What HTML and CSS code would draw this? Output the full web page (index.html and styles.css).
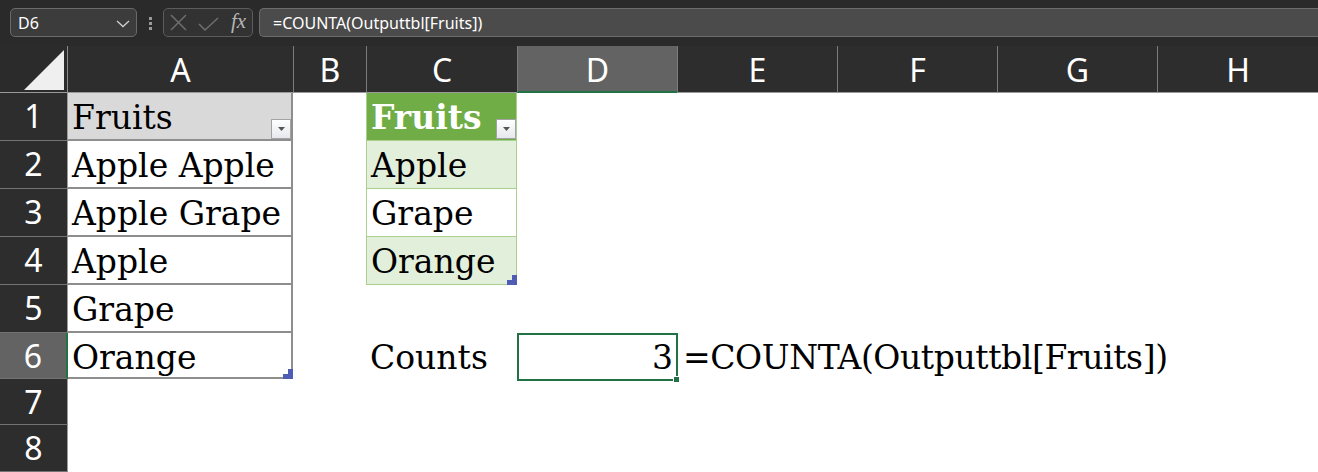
FILE: index.html
```html
<!DOCTYPE html>
<html>
<head>
<meta charset="utf-8">
<link rel="stylesheet" href="styles.css">
</head>
<body>
<div class="topbar">
  <div class="namebox">
    <span class="nb-text">D6</span>
    <svg class="chev" width="14" height="8" viewBox="0 0 14 8"><polyline points="1,1 7,6.5 13,1" fill="none" stroke="#cfcfcf" stroke-width="1.3"/></svg>
  </div>
  <div class="dots">
    <svg width="3" height="13" viewBox="0 0 3 13"><rect x="0" y="0" width="3" height="3" fill="#9a9a9a"/><rect x="0" y="5" width="3" height="3" fill="#9a9a9a"/><rect x="0" y="10" width="3" height="3" fill="#9a9a9a"/></svg>
  </div>
  <div class="fbtns">
    <svg class="ic-x" width="17" height="17" viewBox="0 0 17 17"><line x1="1" y1="1" x2="16" y2="16" stroke="#6e6e6e" stroke-width="1.5"/><line x1="16" y1="1" x2="1" y2="16" stroke="#6e6e6e" stroke-width="1.5"/></svg>
    <svg class="ic-ok" width="21" height="14" viewBox="0 0 21 14"><polyline points="1,7 7,13 20,1" fill="none" stroke="#6e6e6e" stroke-width="1.5"/></svg>
    <span class="fx">fx</span>
  </div>
  <div class="formula">=COUNTA(Outputtbl[Fruits])</div>
</div>

<div class="sheet">
  <!-- header row -->
  <div class="corner"><svg width="40" height="40" viewBox="0 0 40 40"><polygon points="40,0 40,40 0,40" fill="#efefef"/></svg></div>
  <div class="ch first">A</div>
  <div class="ch">B</div>
  <div class="ch">C</div>
  <div class="ch sel-col">D</div>
  <div class="ch">E</div>
  <div class="ch">F</div>
  <div class="ch">G</div>
  <div class="ch">H</div>

  <!-- row 1 -->
  <div class="rh">1</div>
  <div class="d ta ta-head">Fruits<span class="dd"><svg width="7" height="4" viewBox="0 0 7 4"><polygon points="0,0 7,0 3.5,4" fill="#555"/></svg></span></div>
  <div class="c"></div>
  <div class="d tc tc-head">Fruits<span class="dd"><svg width="7" height="4" viewBox="0 0 7 4"><polygon points="0,0 7,0 3.5,4" fill="#555"/></svg></span></div>
  <div class="c"></div><div class="c"></div><div class="c"></div><div class="c"></div><div class="c"></div>

  <!-- row 2 -->
  <div class="rh">2</div>
  <div class="d ta">Apple Apple</div>
  <div class="c"></div>
  <div class="d tc band">Apple</div>
  <div class="c"></div><div class="c"></div><div class="c"></div><div class="c"></div><div class="c"></div>

  <!-- row 3 -->
  <div class="rh">3</div>
  <div class="d ta">Apple Grape</div>
  <div class="c"></div>
  <div class="d tc">Grape</div>
  <div class="c"></div><div class="c"></div><div class="c"></div><div class="c"></div><div class="c"></div>

  <!-- row 4 -->
  <div class="rh">4</div>
  <div class="d ta">Apple</div>
  <div class="c"></div>
  <div class="d tc band">Orange<svg class="rsz" width="10" height="10" viewBox="0 0 10 10"><polygon points="5,0 10,0 10,10 0,10 0,5 5,5" fill="#4e5cb5"/></svg></div>
  <div class="c"></div><div class="c"></div><div class="c"></div><div class="c"></div><div class="c"></div>

  <!-- row 5 -->
  <div class="rh">5</div>
  <div class="d ta">Grape</div>
  <div class="c"></div>
  <div class="c"></div>
  <div class="c"></div><div class="c"></div><div class="c"></div><div class="c"></div><div class="c"></div>

  <!-- row 6 -->
  <div class="rh sel-row">6</div>
  <div class="d ta">Orange<svg class="rsz" width="10" height="10" viewBox="0 0 10 10"><polygon points="5,0 10,0 10,10 0,10 0,5 5,5" fill="#4e5cb5"/></svg></div>
  <div class="c"></div>
  <div class="d">Counts</div>
  <div class="d num">3<span class="selbox"><span class="handle"></span></span></div>
  <div class="d formula-cell">=COUNTA(Outputtbl[Fruits])</div>

  <!-- row 7 -->
  <div class="rh">7</div>
  <div class="c"></div><div class="c"></div><div class="c"></div><div class="c"></div><div class="c"></div><div class="c"></div><div class="c"></div><div class="c"></div>

  <!-- row 8 -->
  <div class="rh">8</div>
  <div class="c"></div><div class="c"></div><div class="c"></div><div class="c"></div><div class="c"></div><div class="c"></div><div class="c"></div><div class="c"></div>
</div>
</body>
</html>
```

FILE: styles.css
```css
* { box-sizing: border-box; }

body {
  margin: 0;
  width: 1318px;
  height: 472px;
  overflow: hidden;
  background: #2b2b2b;
  font-family: "Noto Sans", "Open Sans", sans-serif;
}

/* ---------- formula bar ---------- */
.topbar {
  height: 46px;
  padding: 8px 0 0 10px;
  display: flex;
  align-items: flex-start;
  background: #2a2a2a;
}

.namebox {
  width: 127px;
  height: 29px;
  border: 1px solid #6a6a6a;
  border-radius: 5px;
  background: #3c3c3c;
  display: flex;
  align-items: center;
  justify-content: space-between;
  padding: 0 6px 0 7px;
  color: #ffffff;
  font-size: 16px;
}

.chev { margin-top: 2px; }

.dots {
  width: 26px;
  height: 29px;
  display: flex;
  align-items: center;
  justify-content: center;
  padding-top: 2px;
}

.fbtns {
  width: 90px;
  height: 29px;
  border: 1px solid #5c5c5c;
  border-radius: 5px;
  background: #323232;
  display: flex;
  align-items: center;
  padding-left: 6px;
}

.ic-ok { margin-left: 11px; margin-top: 2px; }

.fx {
  margin-left: 12px;
  font-family: "Liberation Serif", "DejaVu Serif", serif;
  font-style: italic;
  font-size: 21px;
  color: #b5b5b5;
  line-height: 1;
  margin-top: -2px;
}

.formula {
  flex: 1;
  margin-left: 6px;
  height: 29px;
  border: 1px solid #6c6c6c;
  border-right: none;
  border-radius: 5px 0 0 5px;
  background: #4b4b4b;
  color: #ffffff;
  font-size: 16px;
  padding-left: 13px;
  display: flex;
  align-items: center;
}

/* ---------- sheet grid ---------- */
.sheet {
  display: grid;
  grid-template-columns: 68px 225px 73px 151px 160px 160px 160px 160px 1fr;
  grid-template-rows: 47px 48px 48px 48px 48px 48px 46px 46px 47px;
  background: #ffffff;
}

.corner {
  background: #2b2b2b;
  border-right: 1px solid #8a8a8a;
  border-bottom: 1px solid #9a9a9a;
  padding: 4px 0 0 24px;
}
.corner svg { display: block; }

.ch {
  background: #2d2d2d;
  border-left: 1px solid #7c7c7c;
  border-bottom: 1px solid #9a9a9a;
  color: #ffffff;
  font-size: 32px;
  line-height: 32px;
  padding-top: 8px;
  text-align: center;
}
.ch.first { border-left: none; }
.ch.sel-col {
  background: #636363;
  border-bottom: 2px solid #217346;
}

.rh {
  background: #2d2d2d;
  border-right: 1px solid #9a9a9a;
  border-bottom: 1px solid #727272;
  color: #ffffff;
  font-size: 32px;
  line-height: 32px;
  padding-top: 7px;
  text-align: center;
}
.rh.sel-row {
  background: #636363;
  border-right: 2px solid #217346;
}

.c { background: #ffffff; }

.d {
  position: relative;
  font-family: "DejaVu Serif", "Liberation Serif", serif;
  font-size: 33px;
  line-height: 33px;
  padding: 8px 0 0 4px;
  white-space: nowrap;
  color: #000000;
  background: #ffffff;
}

/* table A (gray style) */
.ta {
  border-right: 2px solid #8e8e8e;
  border-bottom: 2px solid #8e8e8e;
}
.ta-head { background: #d9d9d9; }

/* table C (green style) */
.tc {
  border-left: 1px solid #a9d08e;
  border-right: 1px solid #a9d08e;
  border-bottom: 1px solid #a9d08e;
  padding-left: 4px;
}
.tc-head {
  background: #70ad47;
  color: #ffffff;
  font-weight: bold;
}
.tc.band { background: #e2efda; }

.dd {
  position: absolute;
  right: 0;
  bottom: 1px;
  width: 20px;
  height: 20px;
  border: 1px solid #a3a3a3;
  background: linear-gradient(#ffffff, #e6e8ec);
  display: flex;
  align-items: center;
  justify-content: center;
}
.ta-head .dd { right: 0; bottom: 0; }
.dd svg { display: block; }

.rsz {
  position: absolute;
  right: -1px;
  bottom: -1px;
}
.ta .rsz { right: -2px; bottom: -2px; }

.num {
  text-align: right;
  padding-right: 4px;
  z-index: 2;
}

.selbox {
  position: absolute;
  left: 0;
  top: 0;
  width: 161px;
  height: 48px;
  border: 2px solid #217346;
}
.handle {
  position: absolute;
  right: -4px;
  bottom: -4px;
  width: 7px;
  height: 7px;
  background: #217346;
  border: 1px solid #ffffff;
}

.formula-cell {
  grid-column: span 4;
  padding-left: 6px;
  letter-spacing: -0.4px;
}
```
